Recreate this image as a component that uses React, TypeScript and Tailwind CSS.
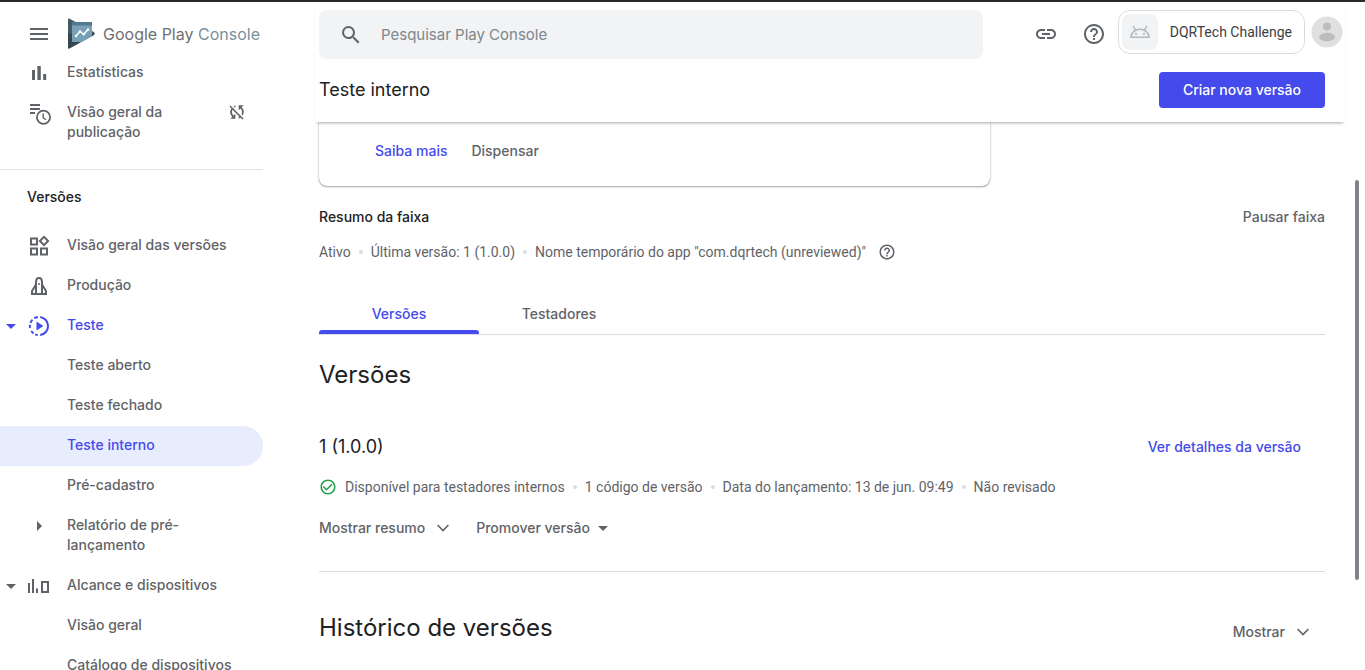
import type { ReactNode } from "react";
import { MdCheckCircleOutline, MdHelpOutline, MdLink, MdMenu, MdSearch, MdSyncDisabled } from "react-icons/md";

function CaretDown({ className = "" }: { className?: string }) {
  return (
    <svg viewBox="0 0 10 5" className={`h-[5px] w-2.5 fill-current ${className}`} aria-hidden="true">
      <path d="M0 0h10L5 5z" />
    </svg>
  );
}

function ChevronDown() {
  return (
    <svg viewBox="0 0 12 8" className="h-2 w-3 fill-none stroke-current" strokeWidth="1.6" aria-hidden="true">
      <path d="M0.6 1 6 6.6 11.4 1" />
    </svg>
  );
}

function Icon({ children }: { children: ReactNode }) {
  return (
    <svg viewBox="0 0 24 24" className="h-6 w-6 shrink-0 fill-current" aria-hidden="true">
      {children}
    </svg>
  );
}

const statsIcon = (
  <Icon>
    <path d="M5 9h3v10H5zM10.4 5h3.4v14h-3.4zM16.2 13h3v6h-3z" />
  </Icon>
);

const publishingIcon = (
  <Icon>
    <path d="M3 3h10v2H3zM3 7h10v2H3zM3 11h5v2H3z" />
    <circle cx="16.5" cy="16.2" r="8.2" fill="#fff" />
    <circle cx="16.5" cy="16.2" r="6.6" fill="none" stroke="currentColor" strokeWidth="1.8" />
    <path d="M16.2 12.5v4.2l2.8 2" fill="none" stroke="currentColor" strokeWidth="1.4" />
  </Icon>
);

const releasesIcon = (
  <Icon>
    <g fill="none" stroke="currentColor" strokeWidth="2">
      <path d="M4 4.5h6v6H4zM4 14.5h6v6H4zM14 14.5h6v6h-6zM17 2.9l4.1 4.1-4.1 4.1-4.1-4.1z" />
    </g>
  </Icon>
);

const productionIcon = (
  <Icon>
    <g fill="none" stroke="currentColor" strokeWidth="2">
      <path d="M9 20V8.4C9 5.6 10.2 4 12 4s3 1.6 3 4.400V20" />
      <path d="M9 10.5 5 17v3h14v-3L15 10.5" />
    </g>
    <circle cx="12" cy="10" r="1" />
  </Icon>
);

const testingIcon = (
  <Icon>
    <g fill="none" stroke="currentColor" strokeWidth="2">
      <path d="M13.2 2.900a9.200 9.200 0 0 1 0 18.200" />
      <path d="M10.800 2.900a9.200 9.200 0 0 0-3.600 1.300M5.500 5.600a9.200 9.200 0 0 0-2 3.200M2.900 10.800a9.200 9.200 0 0 0 .2 3.200M4.300 17a9.200 9.200 0 0 0 2.300 2.400M8.200 20.400a9.200 9.200 0 0 0 2.600.7" />
    </g>
    <path d="M9.500 7.400v9.200L16.400 12z" />
  </Icon>
);

const reachIcon = (
  <Icon>
    <path d="M1 9h2v10H1zM5 5h2v14H5zM9 14.500h2V19H9z" />
    <path d="M15 8h6v10h-6z" fill="none" stroke="currentColor" strokeWidth="2" />
  </Icon>
);

type ItemProps = {
  label: string;
  icon?: ReactNode;
  caret?: "down" | "right";
  tone?: "plain" | "accent" | "selected";
  trailing?: ReactNode;
};

function NavItem({ label, icon, caret, tone = "plain", trailing }: ItemProps) {
  const color = tone === "plain" ? "text-[#5f6368]" : "text-[#444aeb]";
  const fill = tone === "selected" ? "bg-[#e8edfe]" : "";
  return (
    <li>
      <a href="#" className={`flex items-start rounded-r-full pt-[9px] pr-4 pb-[11px] ${color} ${fill}`}>
        <span className="flex h-5 w-[27px] shrink-0 items-center pt-0.5 pl-1.5">
          {caret === "down" && <CaretDown />}
        </span>
        <span className="flex h-5 w-10 shrink-0 items-center pt-0.5">
          {icon}
          {caret === "right" && (
            <svg viewBox="0 0 5 10" className="ml-2.5 h-2.5 w-[5px] fill-current" aria-hidden="true">
              <path d="M0 0v10l5-5z" />
            </svg>
          )}
        </span>
        <span className="w-[130px] grow text-[14px] leading-5 font-medium">{label}</span>
        {trailing}
      </a>
    </li>
  );
}

function Logo() {
  return (
    <a href="#" className="flex items-center gap-2">
      <svg viewBox="0 0 28 32" className="h-8 w-7" aria-hidden="true">
        <path d="M1 1.500C1 .6 1.900.3 2.700.7L26.800 14c1.100.7 1.100 2.300 0 3L2.700 30.300C1.900 30.700 1 30.400 1 29.500z" fill="#455a64" />
        <path d="M1 15.500h26.600c0 .6-.3 1.200-.8 1.500L2.700 30.300C1.900 30.700 1 30.400 1 29.500z" fill="#37474f" />
        <path d="M5 4h20v14l-10.500 6H5z" fill="#78a1b8" />
        <path d="M5 4h20v3.500H5z" fill="#547a8e" />
        <path d="M9 18l4-4.500 3.800 2.800L21 11.500" fill="none" stroke="#fff" strokeWidth="1.500" />
        <g fill="#fff">
          <circle cx="9" cy="18" r="1.200" />
          <circle cx="13" cy="13.500" r="1.200" />
          <circle cx="16.800" cy="16.300" r="1.200" />
          <circle cx="21" cy="11.500" r="1.200" />
        </g>
      </svg>
      <span className="text-[16px] leading-6 whitespace-nowrap text-[#78909c]">
        <span className="text-[#707070]">Google Play</span> Console
      </span>
    </a>
  );
}

function Sidebar() {
  return (
    <aside className="w-[263px] shrink-0 overflow-hidden">
      <div className="flex h-[51px] items-start gap-4 pt-4 pl-[27px]">
        <button type="button" aria-label="Menu" className="flex h-8 items-center text-[#5f6368]">
          <MdMenu size={24} />
        </button>
        <Logo />
      </div>
      <nav>
        <ul className="border-b border-[#e4e5e8] pb-4">
          <NavItem label="Estatísticas" icon={statsIcon} />
          <NavItem
            label="Visão geral da publicação"
            icon={publishingIcon}
            trailing={<MdSyncDisabled size={20} className="shrink-0" />}
          />
        </ul>
        <h2 className="pt-[17px] pb-[19px] pl-[27px] text-[14px] leading-5 font-medium text-[#202124]">Versões</h2>
        <ul>
          <NavItem label="Visão geral das versões" icon={releasesIcon} />
          <NavItem label="Produção" icon={productionIcon} />
          <NavItem label="Teste" icon={testingIcon} caret="down" tone="accent" />
          <NavItem label="Teste aberto" />
          <NavItem label="Teste fechado" />
          <NavItem label="Teste interno" tone="selected" />
          <NavItem label="Pré-cadastro" />
          <NavItem label="Relatório de pré-lançamento" caret="right" />
          <NavItem label="Alcance e dispositivos" icon={reachIcon} caret="down" />
          <NavItem label="Visão geral" />
          <NavItem label="Catálogo de dispositivos" />
        </ul>
      </nav>
    </aside>
  );
}

function TopBar() {
  return (
    <header className="relative z-10 bg-white pt-2 pb-3.5 pl-1 shadow-[0_3px_3px_-2px_rgba(60,64,67,0.45)]">
      <div className="flex h-[49px] items-start">
        <label className="flex h-full max-w-[664px] grow items-center gap-[18px] rounded-lg bg-[#f1f3f4] px-5 text-[#5f6368]">
          <MdSearch size={24} className="shrink-0" />
          <input
            type="search"
            aria-label="Pesquisar"
            placeholder="Pesquisar Play Console"
            className="w-full bg-transparent text-[15px] leading-6 outline-none placeholder:text-[#80868b]"
          />
        </label>
        <div className="ml-auto flex items-center text-[#5f6368]">
          <button type="button" aria-label="Copiar link" className="mr-6">
            <MdLink size={24} />
          </button>
          <button type="button" aria-label="Ajuda" className="mr-3">
            <MdHelpOutline size={24} />
          </button>
          <button
            type="button"
            className="mr-1.5 mb-1 flex h-11 items-center gap-3 rounded-xl border border-[#dadce0] pr-3 pl-[3px] font-[Roboto,sans-serif] text-[14px] text-[#3c4043]"
          >
            <span className="flex h-9 w-9 items-center justify-center rounded-lg bg-[#f1f3f4] text-[#b5b8bc]">
              <svg viewBox="0 0 20 14" className="h-3.5 w-5 fill-none stroke-current" strokeWidth="1.5" aria-hidden="true">
                <path d="M.9 12.200C1.300 7.200 5.300 4.200 10 4.200s8.700 3 9.100 8zM5.400 5.300 3.200 1M14.600 5.300l2.200-4.300" />
                <circle cx="6" cy="9" r=".4" />
                <circle cx="14" cy="9" r=".4" />
              </svg>
            </span>
            DQRTech Challenge
          </button>
          <button type="button" aria-label="Conta" className="mr-0.5 mb-1">
            <svg viewBox="0 0 32 32" className="h-8 w-8" aria-hidden="true">
              <circle cx="16" cy="16" r="15.500" fill="#e0e0e0" />
              <circle cx="16" cy="10.500" r="4" fill="#bdbdbd" />
              <ellipse cx="16" cy="21" rx="8" ry="4.300" fill="#bdbdbd" />
            </svg>
          </button>
        </div>
      </div>
      <div className="mt-[13px] flex items-center justify-between pr-5">
        <h1 className="text-[18px] leading-6 text-[#202124]">Teste interno</h1>
        <button type="button" className="h-9 rounded bg-[#444aeb] px-6 pb-0.5 text-[14px] font-medium text-white">
          Criar nova versão
        </button>
      </div>
    </header>
  );
}

function Facts({ items }: { items: string[] }) {
  return (
    <ul className="flex items-center font-[Roboto,sans-serif] text-[14px] leading-5">
      {items.map((item, i) => (
        <li key={item} className="flex items-center whitespace-nowrap">
          {i > 0 && <span className="mx-2 h-1 w-1 rounded-full bg-[#dadce0]" />}
          {item}
        </li>
      ))}
    </ul>
  );
}

function TrackPage() {
  return (
    <main className="pr-5 pl-1 text-[14px] leading-5 text-[#5f6368]">
      <section className="flex h-16 w-2/3 items-center gap-6 rounded-b-lg pb-1.5 pl-14 font-medium shadow-[0_1px_2px_rgba(60,64,67,0.45),0_0_1px_rgba(60,64,67,0.5)]">
        <a href="#" className="text-[#444aeb]">Saiba mais</a>
        <button type="button">Dispensar</button>
      </section>

      <div className="mt-[21px] flex items-center justify-between font-medium">
        <h2 className="text-[#202124]">Resumo da faixa</h2>
        <button type="button">Pausar faixa</button>
      </div>
      <div className="mt-[15px] flex items-center gap-3">
        <Facts items={["Ativo", "Última versão: 1 (1.0.0)", 'Nome temporário do app "com.dqrtech (unreviewed)"']} />
        <button type="button" aria-label="Mais informações">
          <MdHelpOutline size={18} />
        </button>
      </div>

      <div role="tablist" className="mt-8 flex border-b border-[#dadce0] font-medium">
        <button type="button" role="tab" aria-selected="true" className="flex h-10 w-40 flex-col items-center justify-between pt-2.5 text-[#444aeb]">
          Versões
          <span className="h-1 w-full rounded-t-[3px] bg-[#444aeb]" />
        </button>
        <button type="button" role="tab" aria-selected="false" className="h-10 w-40">
          Testadores
        </button>
      </div>

      <h2 className="mt-6 text-[24px] leading-8 text-[#202124]">Versões</h2>
      <div className="mt-11 flex items-center justify-between pr-6">
        <h3 className="text-[18px] leading-6 text-[#202124]">1 (1.0.0)</h3>
        <a href="#" className="font-medium text-[#444aeb]">Ver detalhes da versão</a>
      </div>
      <div className="mt-[18px] flex items-center gap-2">
        <MdCheckCircleOutline size={18} className="text-[#1e9e4a]" />
        <Facts
          items={[
            "Disponível para testadores internos",
            "1 código de versão",
            "Data do lançamento: 13 de jun. 09:49",
            "Não revisado",
          ]}
        />
      </div>
      <div className="mt-[21px] flex items-center gap-[27px] font-medium">
        <button type="button" className="flex items-center gap-3">
          Mostrar resumo <ChevronDown />
        </button>
        <button type="button" className="flex items-center gap-2">
          Promover versão <CaretDown />
        </button>
      </div>

      <div className="mt-[33px] flex items-end justify-between border-t border-[#dadce0] pt-10">
        <h2 className="text-[24px] leading-8 text-[#202124]">Histórico de versões</h2>
        <button type="button" className="mr-4 mb-0.5 flex items-center gap-3 font-medium">
          Mostrar <ChevronDown />
        </button>
      </div>
    </main>
  );
}

export default function App() {
  return (
    <div className="flex h-screen overflow-hidden border-t-2 border-[#2b292c] bg-white font-[Inter,sans-serif]">
      <Sidebar />
      <div className="ml-[52px] min-w-0 grow">
        <TopBar />
        <TrackPage />
      </div>
      <div className="flex w-5 shrink-0 flex-col items-center pt-[178px]" aria-hidden="true">
        <span className="ml-1 h-[400px] w-1 rounded-full bg-[#80838a]" />
      </div>
    </div>
  );
}
